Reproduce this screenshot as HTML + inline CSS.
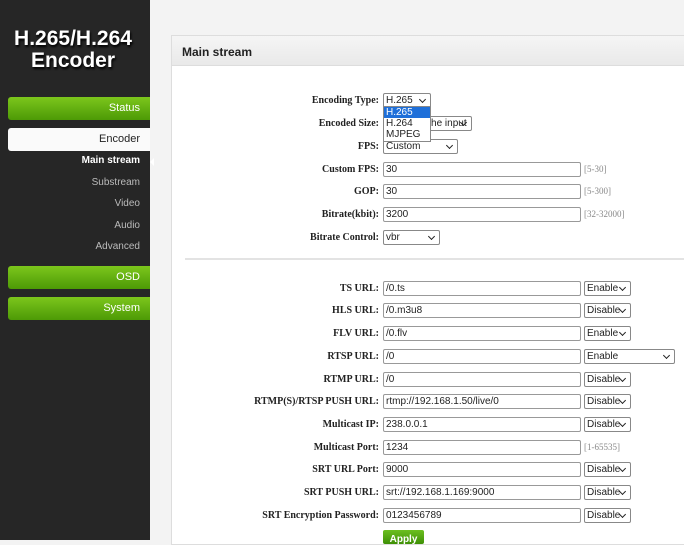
<!DOCTYPE html><html><head><style>
*{margin:0;padding:0;box-sizing:border-box}
body{width:684px;height:540px;overflow:hidden;background:#f3f3f3;position:relative;font-family:"Liberation Sans",sans-serif}
#sb{position:absolute;left:0;top:0;width:150px;height:540px;background:#262626}
.t{position:absolute;left:0;width:146px;text-align:center;color:#fff;font-weight:bold;font-size:21px;text-shadow:1px 2px 2px #000}
.g{position:absolute;left:8px;width:142px;height:23px;background:linear-gradient(#7cc61c,#4d9a06);border-radius:3px 0 0 3px;color:#fff;font-size:11px;text-align:right;padding-right:10px;line-height:23px}
.w{position:absolute;left:8px;width:142px;height:23px;background:#fafafa;border-radius:3px 0 0 3px;color:#222;font-size:11px;text-align:right;padding-right:10px;line-height:23px}
.s{position:absolute;left:0;width:140px;text-align:right;color:#bbb;font-size:10px}
#p{position:absolute;left:171px;top:35px;width:520px;height:510px;background:#fff;border:1px solid #ddd}
#ph{position:absolute;left:0;top:0;width:100%;height:30px;background:linear-gradient(#f5f5f5,#e9e9e9);border-bottom:1px solid #ddd;font-size:12px;font-weight:bold;color:#222;padding:9px 10px}
.l{position:absolute;left:0;width:379px;text-align:right;font-family:"Liberation Serif",serif;font-weight:bold;font-size:10px;color:#222}
.i{position:absolute;left:383px;width:198px;height:15px;border:1px solid #999;border-radius:2px;font-size:10px;padding-left:2px;line-height:13px;color:#222;background:#fff}
.sel{position:absolute;height:15px;border:1px solid #888;border-radius:2px;font-size:10px;padding-left:2px;line-height:13px;color:#222;background:#fff;white-space:nowrap;overflow:hidden}
.sel:after{content:"";position:absolute;right:5px;top:3px;width:4px;height:4px;border-right:1.5px solid #222;border-bottom:1.5px solid #222;transform:rotate(45deg)}
.h{position:absolute;left:584px;font-size:9px;color:#888;font-family:"Liberation Serif",serif}
</style></head><body>
<div id="sb">
<div class="t" style="top:27px">H.265/H.264</div>
<div class="t" style="top:49px">Encoder</div>
<div class="g" style="top:97px">Status</div>
<div class="w" style="top:128px">Encoder</div>
<div class="s" style="top:155px;color:#fff;font-weight:bold">Main stream</div>
<div style="position:absolute;left:146px;top:158px;border:4px solid transparent;border-right-color:#fff"></div>
<div class="s" style="top:177px">Substream</div>
<div class="s" style="top:198px">Video</div>
<div class="s" style="top:220px">Audio</div>
<div class="s" style="top:241px">Advanced</div>
<div class="g" style="top:266px">OSD</div>
<div class="g" style="top:297px">System</div>
</div>
<div id="p"><div id="ph">Main stream</div></div>
<div style="position:absolute;left:185px;top:258px;width:499px;height:2px;background:#e3e3e3"></div>
<div class="l" style="top:95px">Encoding Type:</div><div class="sel" style="left:383px;top:93px;width:48px">H.265</div>
<div class="l" style="top:118px">Encoded Size:</div><div class="sel" style="left:383px;top:116px;width:89px">Same as the input</div>
<div class="l" style="top:141px">FPS:</div><div class="sel" style="left:383px;top:139px;width:75px">Custom</div>
<div style="position:absolute;left:383px;top:106px;width:48px;height:36px;background:#fff;border:1px solid #888;font-size:10px;line-height:11px;color:#222"><div style="background:#1e6fd9;color:#fff;padding-left:2px">H.265</div><div style="padding-left:2px">H.264</div><div style="padding-left:2px">MJPEG</div></div>
<div class="l" style="top:164px">Custom FPS:</div><div class="i" style="top:162px">30</div><div class="h" style="top:164px">[5-30]</div>
<div class="l" style="top:186px">GOP:</div><div class="i" style="top:184px">30</div><div class="h" style="top:186px">[5-300]</div>
<div class="l" style="top:209px">Bitrate(kbit):</div><div class="i" style="top:207px">3200</div><div class="h" style="top:209px">[32-32000]</div>
<div class="l" style="top:232px">Bitrate Control:</div><div class="sel" style="left:383px;top:230px;width:57px">vbr</div>
<div class="l" style="top:283px">TS URL:</div><div class="i" style="top:281px">/0.ts</div><div class="sel" style="left:584px;top:281px;width:47px">Enable</div>
<div class="l" style="top:305px">HLS URL:</div><div class="i" style="top:303px">/0.m3u8</div><div class="sel" style="left:584px;top:303px;width:47px">Disable</div>
<div class="l" style="top:328px">FLV URL:</div><div class="i" style="top:326px">/0.flv</div><div class="sel" style="left:584px;top:326px;width:47px">Enable</div>
<div class="l" style="top:351px">RTSP URL:</div><div class="i" style="top:349px">/0</div><div class="sel" style="left:584px;top:349px;width:91px">Enable</div>
<div class="l" style="top:374px">RTMP URL:</div><div class="i" style="top:372px">/0</div><div class="sel" style="left:584px;top:372px;width:47px">Disable</div>
<div class="l" style="top:396px">RTMP(S)/RTSP PUSH URL:</div><div class="i" style="top:394px">rtmp://192.168.1.50/live/0</div><div class="sel" style="left:584px;top:394px;width:47px">Disable</div>
<div class="l" style="top:419px">Multicast IP:</div><div class="i" style="top:417px">238.0.0.1</div><div class="sel" style="left:584px;top:417px;width:47px">Disable</div>
<div class="l" style="top:442px">Multicast Port:</div><div class="i" style="top:440px">1234</div><div class="h" style="top:442px">[1-65535]</div>
<div class="l" style="top:464px">SRT URL Port:</div><div class="i" style="top:462px">9000</div><div class="sel" style="left:584px;top:462px;width:47px">Disable</div>
<div class="l" style="top:487px">SRT PUSH URL:</div><div class="i" style="top:485px">srt://192.168.1.169:9000</div><div class="sel" style="left:584px;top:485px;width:47px">Disable</div>
<div class="l" style="top:510px">SRT Encryption Password:</div><div class="i" style="top:508px">0123456789</div><div class="sel" style="left:584px;top:508px;width:47px">Disable</div>
<div style="position:absolute;left:383px;top:530px;width:41px;height:14px;background:linear-gradient(#6cbf20,#3d8f05);border-radius:2px;color:#fff;font-size:10px;font-weight:bold;text-align:center;padding-top:4px">Apply</div>
</body></html>
